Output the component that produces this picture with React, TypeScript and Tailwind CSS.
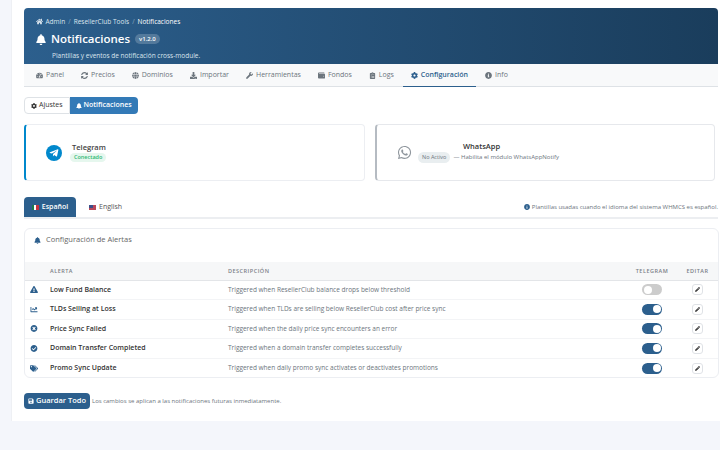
import React from "react";
import { FaHome, FaBell, FaTachometerAlt, FaSyncAlt, FaGlobe, FaDownload, FaWrench, FaWallet, FaClipboardList, FaCog, FaInfoCircle, FaTelegramPlane, FaWhatsapp, FaExclamationTriangle, FaChartLine, FaTimesCircle, FaCheckCircle, FaTags, FaPencilAlt, FaSave } from "react-icons/fa";

const tabs = [
  { label: "Panel", icon: FaTachometerAlt },
  { label: "Precios", icon: FaSyncAlt },
  { label: "Dominios", icon: FaGlobe },
  { label: "Importar", icon: FaDownload },
  { label: "Herramientas", icon: FaWrench },
  { label: "Fondos", icon: FaWallet },
  { label: "Logs", icon: FaClipboardList },
  { label: "Configuración", icon: FaCog, active: true },
  { label: "Info", icon: FaInfoCircle },
];

const rows = [
  { icon: FaExclamationTriangle, name: "Low Fund Balance", desc: "Triggered when ResellerClub balance drops below threshold", on: false },
  { icon: FaChartLine, name: "TLDs Selling at Loss", desc: "Triggered when TLDs are selling below ResellerClub cost after price sync", on: true },
  { icon: FaTimesCircle, name: "Price Sync Failed", desc: "Triggered when the daily price sync encounters an error", on: true },
  { icon: FaCheckCircle, name: "Domain Transfer Completed", desc: "Triggered when a domain transfer completes successfully", on: true },
  { icon: FaTags, name: "Promo Sync Update", desc: "Triggered when daily promo sync activates or deactivates promotions", on: true },
];

function Toggle({ on }: { on: boolean }) {
  return (
    <div className={`w-5 h-[11px] rounded-full flex items-center px-[1.5px] ${on ? "bg-[#2c5f8d] justify-end" : "bg-[#ccc] justify-start"}`}>
      <div className="w-2 h-2 rounded-full bg-white" />
    </div>
  );
}

export default function App() {
  return (
    <div className="w-[720px] h-[450px] overflow-hidden bg-[#f4f6fb] text-[#333] font-['Open_Sans',sans-serif]">
      <div className="ml-[11px] h-[421px] bg-white pl-3 pr-[2px] pt-2 border-l border-[#eef0f4]">
        <div className="h-14 rounded-t-[4px] rounded-b-none bg-gradient-to-r from-[#2c5f8d] to-[#1a3d5c] pl-3 pt-[9px] text-white">
          <div className="flex items-center text-[6.5px] leading-[9px] h-[9px] text-[#dbe5ee]">
            <FaHome className="w-[7px] h-[7px] mr-[1.5px]" />
            <span className="ml-[1px]">Admin</span>
            <span className="mx-[3px] opacity-50">/</span>
            <span>ResellerClub Tools</span>
            <span className="mx-[3px] opacity-50">/</span>
            <span className="text-white">Notificaciones</span>
          </div>
          <div className="flex items-center mt-[4px] h-[18px]">
            <FaBell className="w-[10px] h-[11px]" />
            <span className="ml-[5px] text-[11.5px] font-semibold leading-none">Notificaciones</span>
            <span className="ml-[5px] rounded-full bg-white/20 px-[4px] h-[10px] flex items-center text-[6px] font-semibold">v1.2.0</span>
          </div>
          <div className="mt-[3px] ml-4 text-[6.5px] leading-[9px] text-[#dbe5ee]">Plantillas y eventos de notificación cross-module.</div>
        </div>

        <div className="h-[22px] bg-[#f8f9fa] border-b border-[#dee2e6] flex pl-3 box-content">
          {tabs.map((t) => (
            <div
              key={t.label}
              className={`flex items-center gap-[3px] h-[23px] text-[7px] ${t.active ? "px-2 -ml-2 mr-[9px] font-semibold text-[#2c5f8d] border-b-[1.5px] border-[#2c5f8d]" : "mr-[17px] text-[#6c757d]"}`}
            >
              <t.icon className="w-[7px] h-[7px] shrink-0" />
              <span>{t.label}</span>
            </div>
          ))}
        </div>

        <div className="flex mt-[10px]">
          <div className="h-[17px] px-[6px] flex items-center gap-[2px] text-[7px] border border-[#dee2e6] rounded-l-[4px] bg-white text-[#333]">
            <FaCog className="w-[6px] h-[6px]" /> Ajustes
          </div>
          <div className="h-[17px] px-[6px] flex items-center gap-[2px] text-[7px] font-semibold rounded-r-[4px] bg-[#337ab7] text-white">
            <FaBell className="w-[6px] h-[6px]" /> Notificaciones
          </div>
        </div>

        <div className="flex gap-[10px] mt-[10px]">
          <div className="w-[341px] h-[57px] border border-[#eceef2] border-l-[2.5px] border-l-[#0088cc] rounded-[4px] flex items-center pl-5">
            <div className="w-4 h-4 rounded-full bg-[#0088cc] flex items-center justify-center text-white">
              <FaTelegramPlane className="w-[10px] h-[10px]" />
            </div>
            <div className="ml-2 -mt-[1px]">
              <div className="text-[7.5px] leading-[10px] font-semibold ml-[2px] text-[#444]">Telegram</div>
              <div className="mt-[1px] h-[9px] px-[4px] rounded-full bg-[#e6f7ee] text-[#2eb872] text-[5.5px] font-semibold flex items-center">Conectado</div>
            </div>
          </div>
          <div className="w-[340px] h-[57px] border border-[#e6e8ec] border-l-[2.5px] border-l-[#b5bbc2] rounded-[4px] flex items-center pl-5">
            <FaWhatsapp className="w-[15px] h-[15px] text-[#8f969d] shrink-0" />
            <div className="ml-[6px] -mt-[1px]">
              <div className="text-[7.5px] leading-[10px] font-semibold text-center pr-[14px] text-[#333]">WhatsApp</div>
              <div className="mt-[1px] flex items-center text-[6px] text-[#6c757d] whitespace-nowrap">
                <span className="h-[11px] px-[4px] rounded-full bg-[#e9eef0] text-[5.5px] flex items-center mr-[3px]">No Activo</span>
                — Habilita el módulo WhatsAppNotify
              </div>
            </div>
          </div>
        </div>

        <div className="flex items-end h-[20px] mt-[16px] border-b-[2px] border-[#eceef1] box-content">
          <div className="h-[20px] w-[52px] rounded-t-[4px] bg-[#2c5f8d] text-white text-[7px] font-semibold flex items-center justify-center gap-[3px]">
            <span className="w-[7px] h-[5px] flex">
              <span className="flex-1 bg-[#1c7a4b]" /><span className="flex-1 bg-white" /><span className="flex-1 bg-[#c8323c]" />
            </span>
            Español
          </div>
          <div className="h-[20px] ml-[13px] text-[7px] text-[#555] font-medium flex items-center gap-[3px]">
            <span className="w-[7px] h-[5px] bg-[#b8475a] relative">
              <span className="absolute left-0 top-0 w-[3.5px] h-[3px] bg-[#3c4f8a]" />
            </span>
            English
          </div>
          <div className="ml-auto h-[20px] flex items-center gap-[2px] text-[6px] text-[#6c757d] pr-0 whitespace-nowrap">
            <FaInfoCircle className="w-[6px] h-[6px] text-[#2c5f8d]" />
            Plantillas usadas cuando el idioma del sistema WHMCS es español.
          </div>
        </div>

        <div className="mt-[9px] w-[695px] h-[150px] border border-[#eceef2] rounded-[6px] overflow-hidden">
          <div className="h-[33px] flex items-center pl-[9px] text-[7.5px] text-[#666] pb-[11px]">
            <FaBell className="w-[7px] h-[7px] text-[#2c5f8d]" />
            <span className="ml-[5px]">Configuración de Alertas</span>
          </div>
          <table className="w-full border-collapse table-fixed">
            <thead>
              <tr className="h-[18px] bg-[#f6f7f8] border-b border-[#e3e5e8] text-[5.5px] text-[#7b8087] tracking-[0.5px] font-semibold">
                <th className="w-[25px]" />
                <th className="w-[178px] text-left font-semibold">ALERTA</th>
                <th className="text-left font-semibold">DESCRIPCIÓN</th>
                <th className="w-[50px] text-center font-semibold">TELEGRAM</th>
                <th className="w-[41px] text-center font-semibold">EDITAR</th>
              </tr>
            </thead>
            <tbody>
              {rows.map((r) => (
                <tr key={r.name} className="h-[19.5px] border-b border-[#f3f4f6] last:border-b-0">
                  <td className="pl-[5px]"><r.icon className="w-[8px] h-[7px] text-[#2c5f8d]" /></td>
                  <td className="text-[7px] font-semibold text-[#333]">{r.name}</td>
                  <td className="text-[6.5px] text-[#6c757d] whitespace-nowrap">{r.desc}</td>
                  <td><div className="flex justify-center"><Toggle on={r.on} /></div></td>
                  <td>
                    <div className="flex justify-center">
                      <div className="w-[11px] h-[11px] border border-[#dfe2e6] rounded-[3px] flex items-center justify-center text-[#333]">
                        <FaPencilAlt className="w-[5px] h-[5px]" />
                      </div>
                    </div>
                  </td>
                </tr>
              ))}
            </tbody>
          </table>
        </div>

        <div className="flex items-center mt-[15px]">
          <div className="h-4 w-[66px] rounded-[4px] bg-[#2c5f8d] text-white text-[7.5px] font-semibold flex items-center justify-center gap-[2px]">
            <FaSave className="w-[6px] h-[6px]" /> Guardar Todo
          </div>
          <span className="ml-[2px] text-[6px] text-[#6c757d]">Los cambios se aplican a las notificaciones futuras inmediatamente.</span>
        </div>
      </div>
    </div>
  );
}
